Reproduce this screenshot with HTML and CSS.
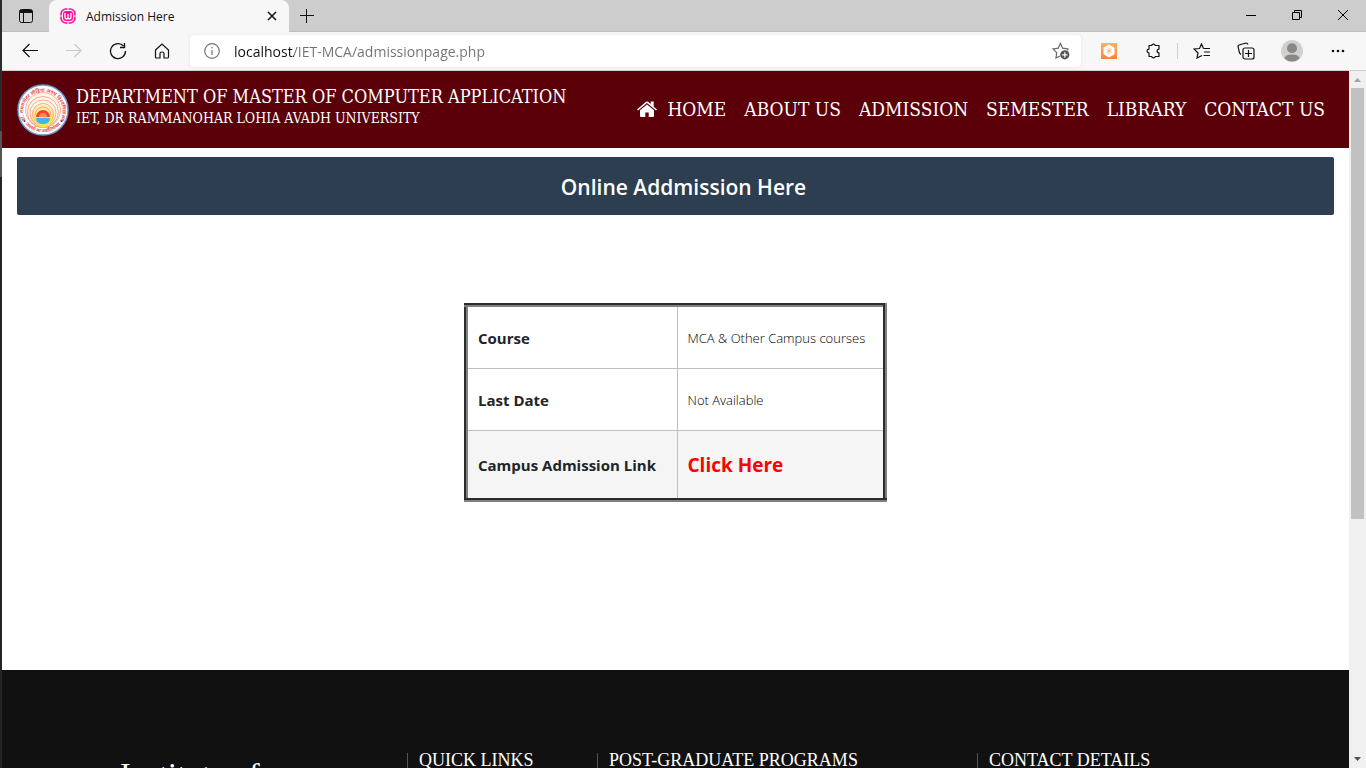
FILE: index.html
```html
<!DOCTYPE html>
<html lang="en">
<head>
<meta charset="utf-8">
<title>Admission Here</title>
<link rel="stylesheet" href="styles.css">
</head>
<body>
<div class="window">
  <div class="tabbar">
    <button class="tab-actions" aria-label="Tab actions menu">
      <svg width="16" height="16" viewBox="0 0 16 16" fill="none" stroke="#111"><rect x="1.5" y="1.5" width="13" height="13" rx="2"/><path d="M1.5 3.5h13M2 2.5h12M2 4.5h12M5.500 5v9"/></svg>
    </button>
    <div class="tab">
      <svg width="16" height="16" viewBox="0 0 16 16" fill="none" stroke="#ff0a9c"><rect x="1" y="1" width="14" height="14" rx="5" stroke-width="1.600"/><rect x="3" y="3" width="10" height="10" rx="3" fill="#ff0a9c" stroke="none"/><path d="M5 5v4q0 2 1.500 2T8 9V6v3q0 2 1.500 2T11 9V5" stroke="#fff" stroke-width="1.300"/><path d="M8 0v2M8 14v2M0 8h2M14 8h2" stroke="#f7f7f7"/></svg>
      <span class="tab-title">Admission Here</span>
      <button class="tab-close" aria-label="Close tab"><svg width="10" height="10" viewBox="0 0 10 10" stroke="#111" stroke-width="1.500"><path d="M1 1l8 8M9 1L1 9"/></svg></button>
    </div>
    <button class="new-tab" aria-label="New tab"><svg width="14" height="14" viewBox="0 0 14 14" stroke="#111"><path d="M6.500 0v14M0 6.500h14"/></svg></button>
    <div class="window-controls">
      <button aria-label="Minimize"><svg width="10" height="10" viewBox="0 0 10 10" stroke="#000"><path d="M0 5.500h10"/></svg></button>
      <button aria-label="Restore"><svg width="10" height="10" viewBox="0 0 10 10" fill="none" stroke="#000"><path d="M.5 2.500h7v7h-7zM2.500 2.500v-2h7v7h-2"/></svg></button>
      <button aria-label="Close"><svg width="10" height="10" viewBox="0 0 10 10" stroke="#000"><path d="M0 0l10 10M10 0L0 10"/></svg></button>
    </div>
  </div>
  <div class="toolbar">
    <button aria-label="Back"><svg width="18" height="16" viewBox="0 0 18 16" fill="none" stroke="#111" stroke-width="1.200"><path d="M17 7.500H2M8.500 1L2 7.500 8.500 14"/></svg></button>
    <button aria-label="Forward" disabled><svg width="18" height="16" viewBox="0 0 18 16" fill="none" stroke="#c9c9c9" stroke-width="1.200"><path d="M1 7.500h15M9.500 1L16 7.500 9.500 14"/></svg></button>
    <button aria-label="Refresh"><svg width="18" height="18" viewBox="0 0 18 18" fill="none" stroke="#111" stroke-width="1.300"><path d="M16.500 9A7.500 7.500 0 1 1 14.500 4M15.500 1v4.500H11"/></svg></button>
    <button aria-label="Home"><svg width="16" height="16" viewBox="0 0 16 16" fill="none" stroke="#111" stroke-width="1.200"><path d="M1.500 7L8 1l6.500 6v7q0 1-1 1H10v-4.500q0-1.500-2-1.500t-2 1.500V15H2.500q-1 0-1-1z"/></svg></button>
    <div class="address">
      <svg width="16" height="16" viewBox="0 0 16 16" fill="none" stroke="#767676" stroke-width="1.200"><circle cx="8" cy="8" r="7.300"/><path d="M8 7v5M8 4v1.500"/></svg>
      <input type="text" aria-label="Address" value="localhost/IET-MCA/admissionpage.php">
      <button class="favorite" aria-label="Add to favorites"><svg width="18" height="18" viewBox="0 0 18 18" fill="none" stroke="#666" stroke-width="1.200"><path d="M15.500 8.500L16 7l-5.300-.8L8.500 1.500 6.200 6.200 1 7l3.700 3.700L4 16l4-2"/><circle cx="12.800" cy="12.800" r="4.600" fill="#555" stroke="none"/><path d="M12.800 10.200v5.200M10.200 12.800h5.200" stroke="#fff"/></svg></button>
    </div>
    <button aria-label="Extension"><svg width="16" height="16" viewBox="0 0 16 16"><defs><linearGradient id="orange" x2="0" y2="1"><stop stop-color="#ffb35c"/><stop offset="1" stop-color="#ff8040"/></linearGradient></defs><path fill="url(#orange)" d="M0 0h16v16H0z"/><path fill="#fff" d="M8 1.500l5.500 3.200v6.600L8 14.500l-5.500-3.200V4.700z"/><path fill="none" stroke="#ffa860" stroke-width=".8" d="M8 4.500v7M5.500 6.500l5 3M10.500 6.500l-5 3"/></svg></button>
    <button aria-label="Extensions"><svg width="16" height="18" viewBox="0 0 16 18" fill="none" stroke="#111" stroke-width="1.200"><path d="M4 3.500h2.600a2 2 0 0 1 3.800 0H14v3.600a1.900 1.900 0 1 0 0 3.800v3.600h-3.600a2 2 0 0 1-3.800 0H4v-3.600a1.900 1.900 0 1 1 0-3.800z" stroke-linejoin="round"/></svg></button>
    <span class="divider"></span>
    <button aria-label="Favorites"><svg width="18" height="16" viewBox="0 0 18 16" fill="none" stroke="#111" stroke-width="1.200"><path d="M10.500 5.500L8.500 1 6.500 5.500 1 6l4 4-1 5 5-2.500M10.500 5.500H17M11 9h6M10.500 12.500H17"/></svg></button>
    <button aria-label="Collections"><svg width="18" height="18" viewBox="0 0 18 18" fill="none" stroke="#111" stroke-width="1.200"><path d="M4 12.500L2.500 11 1 4.500Q1 3.500 2 3L9 1q1.500 0 2 1.500M11.500 8v7M8 11.500h7"/><rect x="6" y="6" width="11" height="11" rx="2"/></svg></button>
    <button class="profile" aria-label="Profile"><svg width="22" height="22" viewBox="0 0 22 22"><circle cx="11" cy="11" r="11" fill="#d2d0ce"/><circle cx="11" cy="8.200" r="5" fill="#8a8886"/><path d="M3.500 18.500Q4 14.500 11 14.500t7.500 4A11 11 0 0 1 3.500 18.500z" fill="#8a8886"/></svg></button>
    <button class="menu" aria-label="Settings and more"><svg width="14" height="4" viewBox="0 0 14 4" fill="#111"><circle cx="2" cy="2" r="1.300"/><circle cx="7" cy="2" r="1.300"/><circle cx="12" cy="2" r="1.300"/></svg></button>
  </div>
  <div class="viewport">
    <div class="page">
      <header class="site-header">
        <svg class="seal" width="52" height="52" viewBox="0 0 52 52" role="img" aria-label="University seal">
          <defs><path id="arc-top" d="M8.500 36A19.500 19.500 0 1 1 43.500 36"/><path id="arc-bottom" d="M8 40A23.500 23.500 0 0 0 44 40"/><clipPath id="disc"><circle cx="26" cy="26" r="18"/></clipPath></defs>
          <circle cx="26" cy="26" r="25" fill="#fff" stroke="#6d9cce" stroke-width="1.500"/>
          <g clip-path="url(#disc)">
            <path fill="#fff6ea" d="M8 8h36v36H8z"/>
            <circle cx="26" cy="33" r="12" fill="#ffe24e" opacity=".5"/>
            <g fill="none" stroke="#f5987d" stroke-width=".8"><circle cx="26" cy="31" r="8"/><circle cx="26" cy="30" r="10.500"/><circle cx="26" cy="29" r="13"/><circle cx="26" cy="28" r="15.500"/><circle cx="26" cy="26" r="17.500"/></g>
            <circle cx="26" cy="35" r="8.500" fill="#ffe24e"/>
            <path fill="#f44336" d="M19 33a7 7 0 0 1 14 0z"/><path fill="#ff8a50" d="M22 33a4 4 0 0 1 8 0z"/>
            <path fill="#43b5ea" d="M19 34h14q0 6-7 6t-7-6z"/>
          </g>
          <text class="seal-text"><textPath href="#arc-top">डॉ. राममनोहर लोहिया अवध विश्वविद्यालय</textPath></text>
          <text class="seal-text" text-anchor="middle"><textPath href="#arc-bottom" startOffset="50%">तमसो मा ज्योतिर्गमय</textPath></text>
          <circle cx="7.500" cy="37" r="1" fill="#294fa0"/><circle cx="44.500" cy="37" r="1" fill="#294fa0"/>
        </svg>
        <div class="brand">
          <div class="department">DEPARTMENT OF MASTER OF COMPUTER APPLICATION</div>
          <div class="university">IET, DR RAMMANOHAR LOHIA AVADH UNIVERSITY</div>
        </div>
        <nav class="site-nav">
          <a class="home" href="#"><svg width="20" height="16" viewBox="0 0 20 16" fill="#fff"><path d="M10 3.500L3 9.300V15q0 1 1 1h4.300v-4.500h3.400V16H16q1 0 1-1V9.300z"/><path d="M0 8.500L9 .8q1-.8 2 0l2.700 2.300V.5h3v5.200L20 8.500l-1 1-9-7.400L1 9.500z"/></svg>HOME</a>
          <a href="#">ABOUT US</a><a href="#">ADMISSION</a><a href="#">SEMESTER</a><a href="#">LIBRARY</a><a href="#">CONTACT US</a>
        </nav>
      </header>
      <main class="content">
        <h1 class="banner">Online Addmission Here</h1>
        <table class="admission">
          <tr><th scope="row">Course</th><td>MCA &amp; Other Campus courses</td></tr>
          <tr><th scope="row">Last Date</th><td>Not Available</td></tr>
          <tr class="link-row"><th scope="row">Campus Admission Link</th><td><a href="#">Click Here</a></td></tr>
        </table>
      </main>
      <footer class="site-footer">
        <section class="about"><h2>Institute of</h2></section>
        <section class="links"><h3>QUICK LINKS</h3></section>
        <section class="programs"><h3>POST-GRADUATE PROGRAMS</h3></section>
        <section class="contact"><h3>CONTACT DETAILS</h3></section>
      </footer>
    </div>
    <div class="scrollbar" aria-hidden="true">
      <svg width="17" height="17" viewBox="0 0 17 17"><path fill="#a3a3a3" d="M5 11l3.500-4 3.500 4z"/></svg>
      <div class="track"><div class="thumb"></div></div>
      <svg width="17" height="17" viewBox="0 0 17 17"><path fill="#505050" d="M5 6h7l-3.500 4z"/></svg>
    </div>
  </div>
</div>
</body>
</html>
```
FILE: styles.css
```css
* { box-sizing: border-box; }

body {
  margin: 0;
  height: 100vh;
  padding-left: 2px;
  overflow: hidden;
  background: linear-gradient(#2b2b2b 17%, #555 17%, #555 23%, #242424 23%);
  font-family: "Open Sans", "Noto Sans", sans-serif;
  color: #212529;
}

button {
  display: flex;
  align-items: center;
  justify-content: center;
  padding: 0;
  border: 0;
  background: none;
}

a { color: inherit; text-decoration: none; }

.window { display: flex; flex-direction: column; height: 100%; }

/* Browser chrome */
.tabbar {
  display: flex;
  flex: none;
  height: 32px;
  background: #cdcdcd;
  box-shadow: inset 0 -1px #bdbdbd;
}
.tab-actions { width: 47px; }
.tab {
  display: flex;
  align-items: center;
  width: 240px;
  padding: 0 11px;
  border-radius: 8px 8px 0 0;
  background: #f7f7f7;
  font-size: 12px;
  color: #111;
}
.tab-title { flex: 1; padding-left: 10px; }
.tab-close { width: 12px; height: 20px; }
.new-tab { width: 36px; }
.window-controls { display: flex; margin-left: auto; }
.window-controls button { width: 46px; height: 29px; }

.toolbar {
  display: flex;
  flex: none;
  align-items: center;
  height: 39px;
  padding: 0 6px;
  border-bottom: 1px solid #cfcfcf;
  background: #f7f7f7;
}
.toolbar > button { flex: none; width: 44px; height: 30px; }
.toolbar > .profile, .toolbar > .menu { margin-left: 2px; }
.divider { width: 1px; height: 16px; margin: 0 2px; background: #cfcfcf; }
.address {
  display: flex;
  flex: 1;
  align-items: center;
  height: 32px;
  margin: 0 6px;
  padding: 0 11px 0 14px;
  border-radius: 4px;
  background: #fff;
  box-shadow: 0 0 3px #e2e2e2;
}
.address input {
  flex: 1;
  min-width: 0;
  padding: 0;
  margin-left: 14px;
  border: 0;
  outline: 0;
  font: 14px "Open Sans", "Noto Sans", sans-serif;
  color: transparent;
  background: linear-gradient(90deg, #111 60px, #717171 60px);
  -webkit-background-clip: text;
  background-clip: text;
}

.viewport { display: flex; flex: 1; min-height: 0; }
.page { flex: 1; min-width: 0; overflow: hidden; background: #fff; }
.scrollbar { display: flex; flex-direction: column; width: 17px; background: #f0f0f0; }
.track { flex: 1; padding: 0 2px; }
.thumb { height: 65%; background: #c1c1c1; }

/* Site header */
.site-header {
  display: flex;
  align-items: center;
  height: 77px;
  padding: 0 24px 0 15px;
  background: #5b0009;
  color: #fff;
  font-family: "DejaVu Serif Condensed", "Liberation Serif", serif;
  white-space: nowrap;
}
.seal-text { font: 600 5px "Noto Sans", sans-serif; fill: #e6403c; }
.brand { margin: 0 auto 6px 7px; }
.department { font-size: 18px; line-height: 22px; }
.university { font-size: 14px; line-height: 20px; }
.site-nav { display: flex; gap: 18px; padding-bottom: 2px; font-size: 19px; }
.home { display: flex; align-items: center; gap: 10px; }

/* Admission content */
.content { padding: 9px 15px 168px; }
.banner {
  margin: 0 0 88px;
  padding: 15px 0 13px 16px;
  border-radius: 2px;
  background: #2c3e50;
  color: #fff;
  font-size: 21px;
  font-weight: 600;
  line-height: 30px;
  text-align: center;
}
.admission {
  width: 423px;
  margin: 0 auto;
  border: 4px groove #808080;
  border-collapse: collapse;
  table-layout: fixed;
  line-height: 21px;
}
.admission th, .admission td {
  padding: 21px 10px 19px;
  border: 1px solid #c0c0c0;
  text-align: left;
}
.admission th { width: 211px; font-size: 15px; font-weight: 700; }
.admission td { color: #000; font-size: 13px; font-weight: 300; }
.link-row { background: #f5f5f5; }
.admission .link-row td { color: #f00; font-size: 19px; font-weight: 700; line-height: 27px; }

/* Footer */
.site-footer {
  display: grid;
  grid-template-columns: 287fr 190fr 380fr 254fr;
  min-height: 400px;
  padding: 83px 118px 40px;
  background: #111;
  color: #fff;
  font-family: "Liberation Serif", serif;
}
.site-footer h2, .site-footer h3 { margin: 0; font-weight: 400; }
.site-footer h2 { padding-top: 3px; font-size: 32px; line-height: 36px; }
.site-footer h3 { font-size: 18px; line-height: 14px; }
.links, .programs, .contact { padding-left: 11px; border-left: 1px solid #a33324; }
```
